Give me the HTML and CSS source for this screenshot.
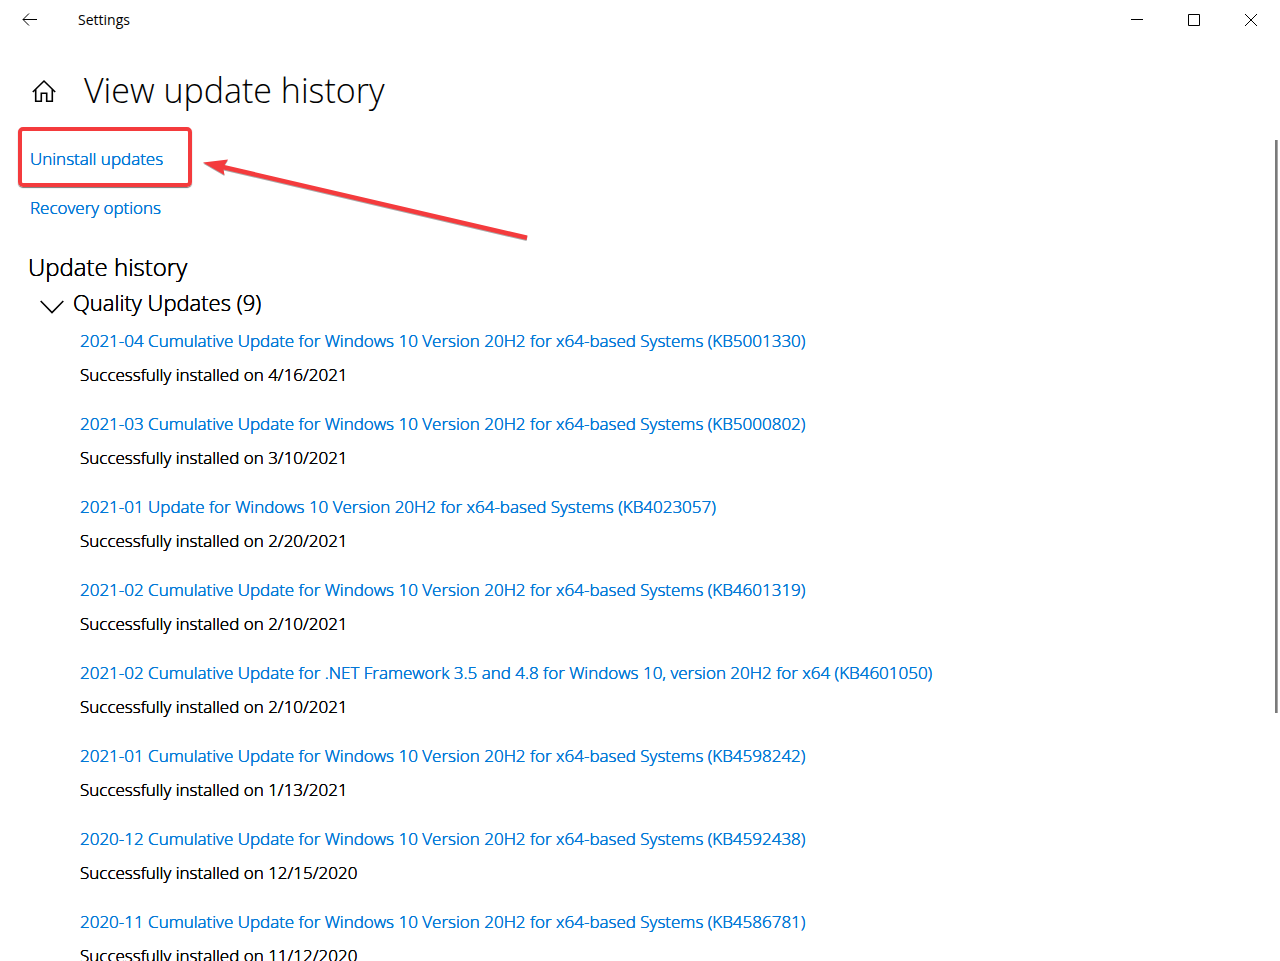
FILE: index.html
```html
<!DOCTYPE html>
<html lang="en">
<head>
<meta charset="utf-8">
<title>Settings</title>
<link rel="stylesheet" href="styles.css">
</head>
<body>
<div class="window">
  <header class="titlebar">
    <button class="icon-button back" aria-label="Back">
      <svg width="16" height="14" viewBox="0 0 16 14"><path d="M15 6.5H1M7 .5l-6 6 6 6"/></svg>
    </button>
    <span class="app-name">Settings</span>
    <div class="window-controls">
      <button class="icon-button" aria-label="Minimize"><svg width="12" height="12" viewBox="0 0 12 12"><path d="M0 5.5h12"/></svg></button>
      <button class="icon-button" aria-label="Maximize"><svg width="12" height="12" viewBox="0 0 12 12"><path d="M.5.5h11v11H.5z"/></svg></button>
      <button class="icon-button" aria-label="Close"><svg width="12" height="12" viewBox="0 0 12 12"><path d="M0 0l12 12M12 0L0 12"/></svg></button>
    </div>
  </header>
  <div class="page-head">
    <button class="icon-button home" aria-label="Home">
      <svg width="24" height="24" viewBox="0 0 24 24"><path d="M.8 13L12 2l11.2 11M3.7 10.5v11.7h5.6v-8h5.4v8h5.6V10.5"/></svg>
    </button>
    <h1 class="page-title">View update history</h1>
  </div>
  <main class="content">
    <nav class="actions">
      <a class="link" href="#uninstall">Uninstall updates</a>
      <a class="link" href="#recovery">Recovery options</a>
    </nav>
    <h2 class="section-title">Update history</h2>
    <button class="group-toggle" aria-expanded="true">
      <svg width="24" height="14" viewBox="0 0 24 14"><path d="M.7 1L12 12.5 23.3 1"/></svg>
      <span>Quality Updates (9)</span>
    </button>
    <ul class="updates">
      <li class="update"><a class="link" href="#kb5001330">2021-04 Cumulative Update for Windows 10 Version 20H2 for x64-based Systems (KB5001330)</a><p class="status">Successfully installed on 4/16/2021</p></li>
      <li class="update"><a class="link" href="#kb5000802">2021-03 Cumulative Update for Windows 10 Version 20H2 for x64-based Systems (KB5000802)</a><p class="status">Successfully installed on 3/10/2021</p></li>
      <li class="update"><a class="link" href="#kb4023057">2021-01 Update for Windows 10 Version 20H2 for x64-based Systems (KB4023057)</a><p class="status">Successfully installed on 2/20/2021</p></li>
      <li class="update"><a class="link" href="#kb4601319">2021-02 Cumulative Update for Windows 10 Version 20H2 for x64-based Systems (KB4601319)</a><p class="status">Successfully installed on 2/10/2021</p></li>
      <li class="update"><a class="link" href="#kb4601050">2021-02 Cumulative Update for .NET Framework 3.5 and 4.8 for Windows 10, version 20H2 for x64 (KB4601050)</a><p class="status">Successfully installed on 2/10/2021</p></li>
      <li class="update"><a class="link" href="#kb4598242">2021-01 Cumulative Update for Windows 10 Version 20H2 for x64-based Systems (KB4598242)</a><p class="status">Successfully installed on 1/13/2021</p></li>
      <li class="update"><a class="link" href="#kb4592438">2020-12 Cumulative Update for Windows 10 Version 20H2 for x64-based Systems (KB4592438)</a><p class="status">Successfully installed on 12/15/2020</p></li>
      <li class="update"><a class="link" href="#kb4586781">2020-11 Cumulative Update for Windows 10 Version 20H2 for x64-based Systems (KB4586781)</a><p class="status">Successfully installed on 11/12/2020</p></li>
    </ul>
  </main>
  <div class="scroll-thumb"></div>
  <div class="highlight"></div>
  <svg class="arrow" width="330" height="90" viewBox="0 0 330 90" aria-hidden="true">
    <path class="arrow-shape" d="M0 9.5L25 6.5 21.5 12 324.500 82.500 323.500 87 20.500 16.500 21.500 22z"/>
  </svg>
</div>
</body>
</html>
```

FILE: styles.css
```css
* { box-sizing: border-box; }
body {
  margin: 0;
  background: #fff;
  color: #000;
  font-family: "Open Sans", "Noto Sans", sans-serif;
  font-size: 17px;
  font-weight: 300;
}
h1, h2, p, ul { margin: 0; padding: 0; }
button { border: 0; padding: 0; background: none; color: inherit; font: inherit; }
svg { display: block; fill: none; stroke: #000; }
.window {
  position: relative;
  display: flex;
  flex-direction: column;
  height: 100vh;
  overflow: hidden;
}
.titlebar { display: flex; flex: none; align-items: center; height: 40px; padding-right: 1px; }
.icon-button { display: flex; align-items: center; justify-content: center; width: 57px; height: 40px; }
.back { width: 60px; }
.app-name { margin-left: 18px; font-size: 14px; font-weight: 400; line-height: 40px; }
.window-controls { display: flex; margin-left: auto; }
.page-head { display: flex; flex: none; align-items: center; height: 102px; padding-left: 31px; }
.home { width: 25px; }
.home svg { stroke-width: 1.6; }
.page-title { margin-left: 28px; padding-bottom: 3px; font-size: 34px; font-weight: 300; line-height: 48px; }
.content { flex: 1; min-height: 0; overflow: hidden; }
.actions { display: flex; flex-direction: column; align-items: flex-start; gap: 15px; padding-left: 30px; }
.link { color: #0078d7; line-height: 34px; text-decoration: none; }
.link, .status, .section-title, .group-toggle { text-shadow: 0 0 0 currentColor, 0 0 0 currentColor; }
.section-title { margin-top: 25px; padding-left: 28px; font-size: 24px; font-weight: 300; line-height: 34px; }
.group-toggle { display: flex; align-items: flex-start; gap: 9px; height: 40px; padding-left: 40px; font-size: 22px; line-height: 36px; }
.group-toggle svg { stroke-width: 1.6; margin-top: 16px; }
.updates { padding-left: 80px; list-style: none; }
.update { margin-bottom: 15px; line-height: 34px; white-space: nowrap; }
.update .link { display: block; }
.scroll-thumb { position: absolute; top: 140px; right: 2px; width: 3px; height: 573px; background: #7a7a7a; border-right: 1px solid #a8a8a8; }
.highlight {
  position: absolute;
  top: 127px;
  left: 18px;
  width: 174px;
  height: 60px;
  border: 4px solid #f43b3d;
  border-radius: 5px;
  box-shadow: 0 1px 1px #777;
  pointer-events: none;
}
.arrow { position: absolute; top: 153px; left: 203px; filter: drop-shadow(0 1px 0 #aaa); pointer-events: none; }
.arrow-shape { fill: #f43b3d; stroke: none; }
```
